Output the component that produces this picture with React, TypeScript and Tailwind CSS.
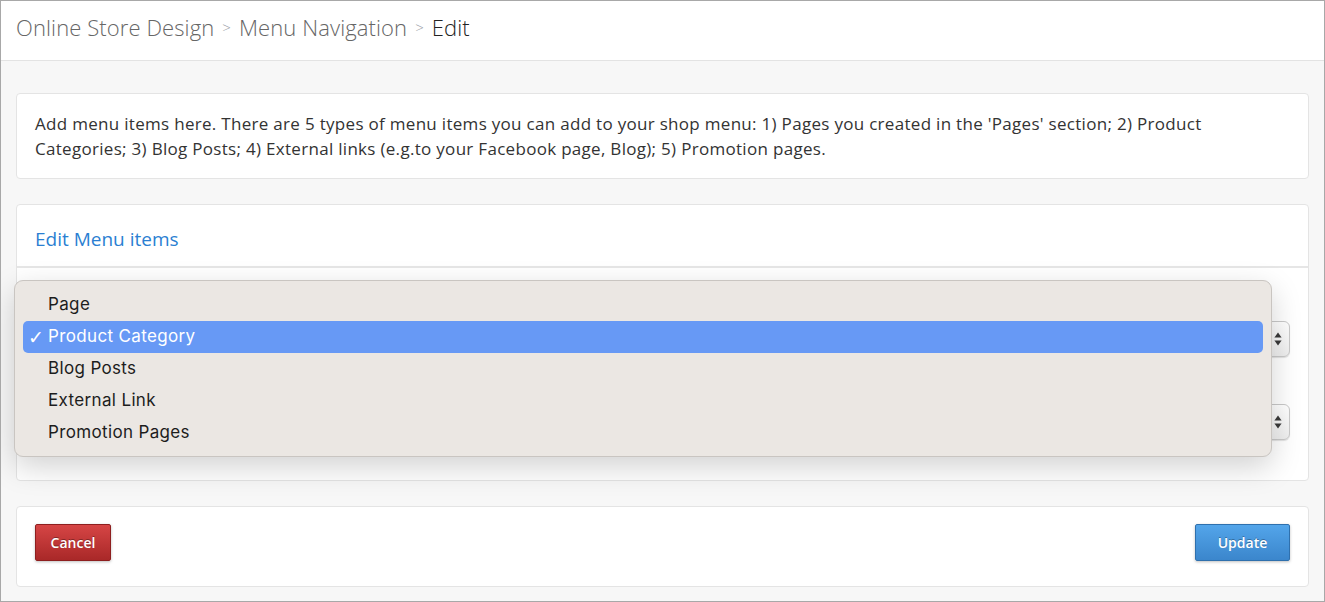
import React from 'react';

const menuTypes = ['Page', 'Product Category', 'Blog Posts', 'External Link', 'Promotion Pages'];

const Stepper = () => (
  <svg width="10" height="16" viewBox="0 0 10 16" className="text-[#3a3a3a]">
    <path d="M5 1.5 L8.6 6.5 H1.4 Z" fill="currentColor" />
    <path d="M5 14.5 L8.6 9.5 H1.4 Z" fill="currentColor" />
  </svg>
);

const FakeSelect = () => (
  <div className="h-[36px] rounded-[6px] border border-[#c9c9c9] bg-gradient-to-b from-white to-[#eeeeee] shadow-[0_1px_1px_rgba(0,0,0,0.12)] flex items-center justify-end pr-[6px]">
    <Stepper />
  </div>
);

export default function App() {
  const selected = 'Product Category';

  return (
    <div className="w-[1325px] h-[602px] border border-[#a8a8a8] bg-[#f7f7f7] flex flex-col font-['Open_Sans',sans-serif] overflow-hidden">
      {/* breadcrumb */}
      <div className="h-[60px] shrink-0 bg-white border-b border-[#e3e3e3] flex items-center px-[15px]">
        <div className="flex items-center text-[22px] font-light text-[#666] tracking-[0.1px] pb-[6px]">
          <span>Online Store Design</span>
          <span className="mx-[8px] text-[15px] text-[#9aa0a8]">&gt;</span>
          <span>Menu Navigation</span>
          <span className="mx-[8px] text-[15px] text-[#9aa0a8]">&gt;</span>
          <span className="text-[#222]">Edit</span>
        </div>
      </div>

      <div className="flex-1 flex flex-col px-[15px] pt-[32px]">
        <div className="bg-white border border-[#e4e4e4] rounded-[4px] pl-[18px] pr-[50px] pt-[17px] pb-[16px] h-[86px]">
          <p className="text-[17px] leading-[25px] tracking-[0.3px] text-[#333]">
            Add menu items here. There are 5 types of menu items you can add to your shop menu: 1) Pages you created in the 'Pages' section; 2) Product Categories; 3) Blog Posts; 4) External links (e.g.to your Facebook page, Blog); 5) Promotion pages.
          </p>
        </div>

        <div className="relative mt-[25px] h-[277px] bg-white border border-[#e4e4e4] rounded-[4px] flex flex-col">
          <div className="h-[63px] shrink-0 border-b-2 border-[#e6e6e6] flex items-center px-[18px]">
            <span className="text-[19px] text-[#2b7fd2] pt-[8px]">Edit Menu items</span>
          </div>
          <div className="flex flex-col gap-[47px] px-[18px] pt-[53px]">
            <FakeSelect />
            <FakeSelect />
          </div>

          {/* native select popup */}
          <div className="absolute left-[-3px] top-[75px] w-[1258px] h-[177px] bg-[#ebe7e3] border border-[#c9c5c1] rounded-[9px] shadow-[0_10px_30px_rgba(0,0,0,0.18)] pt-[8px] px-[8px] font-['Inter',sans-serif]">
            {menuTypes.map((t) => {
              const on = t === selected;
              return (
                <div
                  key={t}
                  className={
                    on
                      ? 'h-[32px] rounded-[5px] bg-[#6799f5] text-white flex items-center pl-[5px] text-[17px] tracking-[0.35px]'
                      : 'h-[32px] flex items-center pl-[5px] text-[17px] tracking-[0.35px] text-[#1d1d1d]'
                  }
                >
                  <span className="w-[20px] shrink-0 text-[19px] leading-none font-['DejaVu_Sans',sans-serif]">{on ? '✓' : ''}</span>
                  <span>{t}</span>
                </div>
              );
            })}
          </div>
        </div>

        <div className="mt-[25px] h-[81px] bg-white border border-[#e4e4e4] rounded-[4px] flex items-start justify-between px-[18px] pt-[17px]">
          <button className="h-[37px] w-[76px] rounded-[2px] border border-[#8e1f1f] bg-gradient-to-b from-[#d64545] to-[#a92828] text-white text-[14px] font-semibold [text-shadow:0_-1px_0_rgba(0,0,0,0.35)] shadow-[0_1px_3px_rgba(0,0,0,0.25)]">
            Cancel
          </button>
          <button className="h-[37px] w-[95px] rounded-[2px] border border-[#2f70ad] bg-gradient-to-b from-[#53a5ea] to-[#3b86cc] text-white text-[14px] font-semibold [text-shadow:0_-1px_0_rgba(0,0,0,0.3)] shadow-[0_1px_3px_rgba(0,0,0,0.25)]">
            Update
          </button>
        </div>
      </div>
    </div>
  );
}
